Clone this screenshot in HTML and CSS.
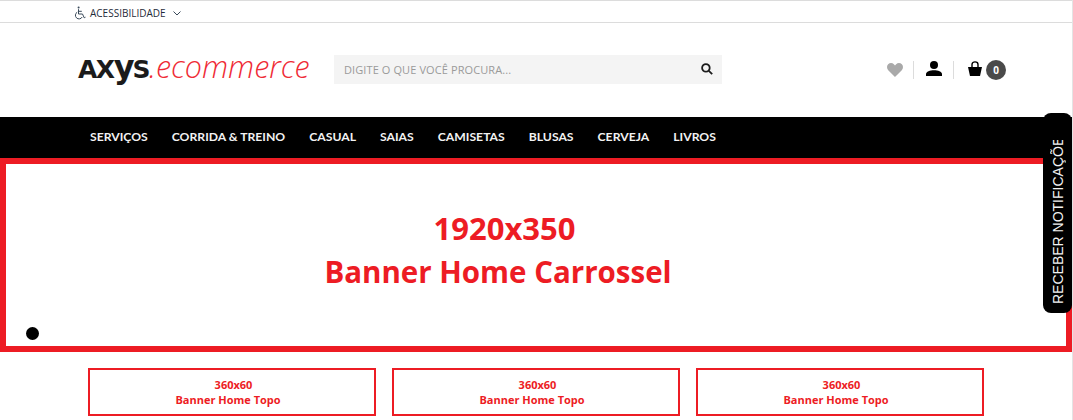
FILE: index.html
```html
<!DOCTYPE html>
<html lang="pt-BR">
<head>
    <meta charset="UTF-8">
    <meta name="viewport" content="width=device-width, initial-scale=1.0">
    <title>Axys Ecommerce</title>
    <link rel="stylesheet" href="styles.css">
</head>
<body>
    <div class="page">
        <div class="topbar">
            <div class="container">
                <svg class="icon-access" width="12" height="14" viewBox="0 0 12 14" fill="none" stroke="#3a4a5a" stroke-width="1">
                    <circle cx="4.6" cy="1.4" r="1" fill="#3a4a5a" stroke="none"/>
                    <path d="M4.5 3.2V8H8.5L10.2 11.8L11.5 11.2"/>
                    <path d="M4.5 5.3H7.8"/>
                    <path d="M3.2 6.2A3.6 3.6 0 1 0 8.2 11"/>
                </svg>
                <span class="access-label">ACESSIBILIDADE</span>
                <svg class="icon-chevron" width="8" height="5" viewBox="0 0 8 5" fill="none" stroke="#3a4a5a" stroke-width="1">
                    <path d="M.5 .5L4 4L7.5 .5"/>
                </svg>
            </div>
        </div>

        <header class="header">
            <div class="logo"><span class="logo-axys">AX<span class="logo-y">y</span>S</span><span class="logo-ecom">.ecommerce</span></div>
            <div class="search">
                <span class="search-text">DIGITE O QUE VOCÊ PROCURA...</span>
                <svg width="12" height="12" viewBox="0 0 12 12" fill="none" stroke="#1c1c1c" stroke-width="1.8">
                    <circle cx="4.9" cy="4.9" r="3.8"/>
                    <path d="M7.8 7.8L11.2 11.2"/>
                </svg>
            </div>
            <div class="actions">
                <svg class="heart" width="16" height="14" viewBox="0 0 17 14" preserveAspectRatio="none" fill="#a9a9a9">
                    <path d="M8.5 14L1.3 7.2C-.4 5.4-.4 2.7 1.2 1.2C2.9-.4 5.7-.4 7.3 1.2L8.5 2.4L9.7 1.2C11.3-.4 14.1-.4 15.8 1.2C17.4 2.7 17.4 5.4 15.7 7.2Z"/>
                </svg>
                <span class="sep sep-first"></span>
                <svg class="user" width="16" height="15" viewBox="0 0 16 15" fill="#000">
                    <circle cx="8" cy="4" r="4"/>
                    <path d="M0 15V13C0 10.5 4 9.2 8 9.2C12 9.2 16 10.5 16 13V15Z"/>
                </svg>
                <span class="sep sep-second"></span>
                <svg class="bag" width="14" height="15" viewBox="0 0 14 15">
                    <path d="M0 6H14L12 15H2Z" fill="#000"/>
                    <path d="M4 7V3.5C4 0 10 0 10 3.5V7" fill="none" stroke="#000" stroke-width="1.4"/>
                </svg>
                <span class="count">0</span>
            </div>
        </header>

        <nav class="nav">
            <a>SERVIÇOS</a>
            <a>CORRIDA &amp; TREINO</a>
            <a>CASUAL</a>
            <a>SAIAS</a>
            <a>CAMISETAS</a>
            <a>BLUSAS</a>
            <a>CERVEJA</a>
            <a>LIVROS</a>
        </nav>

        <section class="hero">
            <p class="first-line">1920x350</p>
            <p>Banner Home Carrossel</p>
            <span class="hero-dot"></span>
        </section>

        <section class="mini-banners">
            <div class="mini"><p class="first-line">360x60</p><p>Banner Home Topo</p></div>
            <div class="mini"><p class="first-line">360x60</p><p>Banner Home Topo</p></div>
            <div class="mini"><p class="first-line">360x60</p><p>Banner Home Topo</p></div>
        </section>
    </div>

    <div class="notify"><span>RECEBER NOTIFICAÇÕES</span></div>
</body>
</html>
```

FILE: styles.css
```css
html, body {
    margin: 0;
    height: 420px;
    overflow: hidden;
    background: #fff;
}
p {
    margin: 0;
}
.page {
    width: 1072px;
    height: 420px;
    border-right: 1px solid #e4e4e4;
    overflow: hidden;
}
.topbar {
    height: 21px;
    border-top: 1px solid #dcdcdc;
    border-bottom: 1px solid #dcdcdc;
}
.container {
    display: flex;
    align-items: center;
    box-sizing: border-box;
    height: 100%;
    padding: 3px 0 0 74px;
}
.access-label {
    margin-left: 4px;
    font-family: "Open Sans", sans-serif;
    font-size: 10px;
    color: #1f2d3a;
}
.icon-chevron {
    margin-left: 7px;
}
.header {
    display: flex;
    align-items: center;
    height: 94px;
    padding-left: 78px;
}
.logo {
    display: flex;
    align-items: baseline;
    width: 256px;
    height: 40px;
    margin-bottom: 9px;
    line-height: 40px;
    white-space: nowrap;
}
.logo-axys {
    font-family: "DejaVu Sans", sans-serif;
    font-weight: 700;
    font-size: 25px;
    letter-spacing: -1.5px;
    color: #1b1b1b;
}
.logo-y {
    font-size: 32px;
    letter-spacing: -2px;
    line-height: 0;
}
.logo-ecom {
    font-family: "Open Sans", sans-serif;
    font-style: italic;
    font-weight: 300;
    font-size: 30.5px;
    color: #ef2b36;
}
.search {
    display: flex;
    align-items: center;
    justify-content: space-between;
    box-sizing: border-box;
    width: 388px;
    height: 29px;
    margin-top: -2px;
    padding: 0 9px 0 10px;
    background: #f4f4f4;
}
.search-text {
    font-family: "Open Sans", sans-serif;
    font-size: 11px;
    letter-spacing: .1px;
    color: #9a9a9a;
}
.actions {
    display: flex;
    align-items: center;
    margin-left: 165px;
}
.sep {
    width: 1px;
    height: 18px;
    background: #dcdcdc;
}
.sep-first {
    margin: 0 12px 0 10px;
}
.sep-second {
    margin: 0 14px 0 11px;
}
.user {
    margin-top: -3px;
}
.bag {
    margin-top: -3px;
}
.count {
    display: flex;
    align-items: center;
    justify-content: center;
    width: 20px;
    height: 20px;
    margin-left: 4px;
    border-radius: 50%;
    background: #4a4a4a;
    color: #fff;
    font-family: "Open Sans", sans-serif;
    font-weight: 700;
    font-size: 10px;
}
.nav {
    display: flex;
    align-items: center;
    gap: 24px;
    box-sizing: border-box;
    height: 41px;
    padding: 0 0 2px 90px;
    background: #000;
}
.nav a {
    font-family: Lato, sans-serif;
    font-weight: 700;
    font-size: 12.2px;
    color: #f2f2f2;
}
.hero {
    position: relative;
    display: flex;
    flex-direction: column;
    align-items: center;
    justify-content: center;
    box-sizing: border-box;
    height: 194px;
    padding: 0 76px 11px 0;
    border: 6px solid #ed1c24;
    font-family: "Open Sans", sans-serif;
    font-weight: 700;
    font-size: 29.5px;
    line-height: 43px;
    color: #ed1c24;
}
.hero .first-line {
    margin-left: 13px;
    font-size: 31px;
}
.hero-dot {
    position: absolute;
    left: 20px;
    bottom: 6px;
    width: 13px;
    height: 13px;
    border-radius: 50%;
    background: #000;
}
.mini-banners {
    display: flex;
    gap: 16px;
    padding: 16px 0 0 88px;
}
.mini {
    display: flex;
    flex-direction: column;
    align-items: center;
    justify-content: center;
    box-sizing: border-box;
    width: 288px;
    height: 48px;
    padding-right: 8px;
    border: 2px solid #ed1c24;
    font-family: "Open Sans", sans-serif;
    font-weight: 700;
    font-size: 11px;
    line-height: 15px;
    color: #ed1c24;
}
.mini .first-line {
    margin-left: 11px;
}
.notify {
    position: absolute;
    top: 113px;
    left: 1043px;
    display: flex;
    align-items: center;
    justify-content: flex-end;
    width: 29px;
    height: 200px;
    border-radius: 8px;
    background: #000;
    writing-mode: vertical-rl;
}
.notify span {
    display: block;
    height: 164px;
    overflow: hidden;
    margin-bottom: 9px;
    transform: rotate(180deg);
    font-family: "Liberation Sans", sans-serif;
    font-size: 14px;
    color: #f2f2f2;
    white-space: nowrap;
}
```
